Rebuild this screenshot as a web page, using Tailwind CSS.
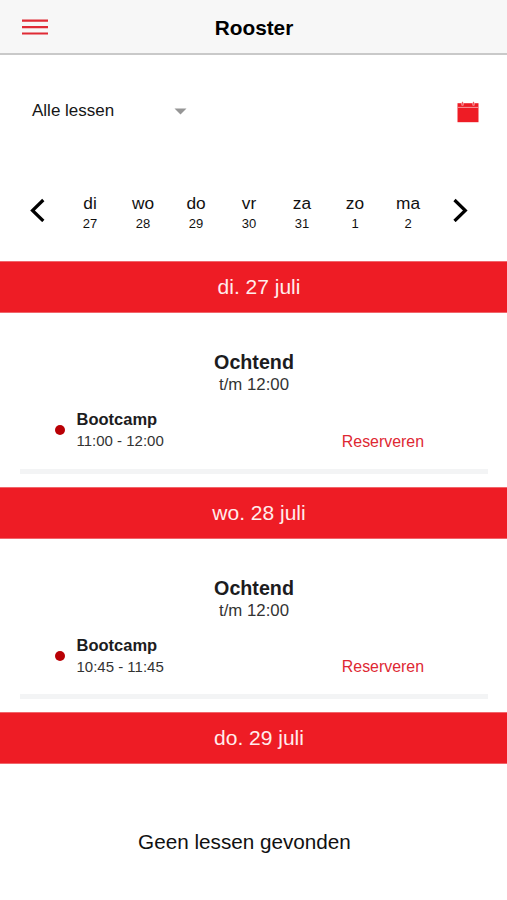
<!DOCTYPE html>
<html lang="nl">
<head>
<meta charset="utf-8">
<title>Rooster</title>
<script src="https://cdn.jsdelivr.net/npm/@tailwindcss/browser@4"></script>
</head>
<body class="w-[507px] h-[900px] overflow-hidden bg-white text-black font-['Liberation_Sans',Arial,sans-serif]">
<header class="h-[55px] bg-[#f7f7f7] border-b-2 border-[#c9c9c9] grid grid-cols-[1fr_auto_1fr] items-center pl-[22px] pr-[21px]">
  <button aria-label="Menu" class="w-[26px]"><svg class="block" width="26" height="18" viewBox="0 0 26 18" stroke="#e02b35" stroke-width="2.2"><path d="M0 2.7h26M0 9.2h26M0 15.5h26"/></svg></button>
  <h1 class="font-bold text-[20.8px] leading-6 pt-[3px]">Rooster</h1>
</header>
<div class="h-[110px] flex items-center justify-between pl-8 pr-7">
  <button class="flex items-center text-[17px] leading-6 text-[#151515]"><span class="w-[142px] text-left pt-[2px]">Alle lessen</span><svg class="mt-[3px]" width="13" height="7" viewBox="0 0 13 7"><path d="M.5.5h12l-6 6z" fill="#969696"/></svg></button>
  <button aria-label="Kalender"><svg class="mt-[3px]" width="22" height="22" viewBox="0 0 22 22"><path d="M.5 2.2h21v19H.5z" fill="#ee1c25"/><path d="M.5 6.4h21" stroke="#f79a9e"/><path d="M5.5 1v3.5M16.5 1v3.5" stroke="#fbc6c8" stroke-width="2"/><path d="M5.5 .8v3M16.5 .8v3" stroke="#ee5a60"/></svg></button>
</div>
<nav class="h-24 flex items-start pt-[26px] text-center">
  <button aria-label="Vorige" class="w-[63.5px] pl-[29px] pr-[16.5px] pt-[7px]"><svg width="18" height="24" viewBox="0 0 18 24" fill="none" stroke="#000" stroke-width="3.2"><path d="M14.3 2 3.5 12.5 14.3 23"/></svg></button>
  <div class="w-[371px] grid grid-cols-7 text-[17.3px] leading-6 text-[#111]">
    <div>di<p class="text-[13px] leading-[18px]">27</p></div>
    <div>wo<p class="text-[13px] leading-[18px]">28</p></div>
    <div>do<p class="text-[13px] leading-[18px]">29</p></div>
    <div>vr<p class="text-[13px] leading-[18px]">30</p></div>
    <div>za<p class="text-[13px] leading-[18px]">31</p></div>
    <div>zo<p class="text-[13px] leading-[18px]">1</p></div>
    <div>ma<p class="text-[13px] leading-[18px]">2</p></div>
  </div>
  <button aria-label="Volgende" class="pl-[16.5px] pt-[7px]"><svg width="18" height="24" viewBox="0 0 18 24" fill="none" stroke="#000" stroke-width="3.2"><path d="M3.5 2 14.3 12.5 3.5 23"/></svg></button>
</nav>
<section class="h-[226px]">
  <h2 class="h-[52px] bg-[#ee1c25] border-y border-[#f0666b] text-center text-[21px] leading-[49px] text-[#ffecec] pl-[11px]">di. 27 juli</h2>
  <div class="pt-[37px] text-center text-[#1c1c1e]">
    <h3 class="font-bold text-[19.7px] leading-6 pl-px">Ochtend</h3>
    <p class="text-[16.8px] leading-[22px] text-[#333] pl-px">t/m 12:00</p>
  </div>
  <div class="ml-5 mr-[19px] mt-[12px] h-[66px] flex items-start border-b-5 border-[#f3f4f5] pl-[34.5px] pr-[64px]">
    <span class="size-[10px] rounded-full bg-[#b90005] mt-[17px] mr-[12px]"></span>
    <div><h4 class="font-bold text-[16.5px] leading-[22px] text-[#1c1c1e] pb-px">Bootcamp</h4><p class="text-[15px] leading-5 text-[#333]">11:00 - 12:00</p></div>
    <button class="ml-auto mt-[23px] text-[15.9px] leading-[22px] text-[#de2833]">Reserveren</button>
  </div>
</section>
<section class="h-[225px]">
  <h2 class="h-[52px] bg-[#ee1c25] border-y border-[#f0666b] text-center text-[21px] leading-[49px] text-[#ffecec] pl-[11px]">wo. 28 juli</h2>
  <div class="pt-[37px] text-center text-[#1c1c1e]">
    <h3 class="font-bold text-[19.7px] leading-6 pl-px">Ochtend</h3>
    <p class="text-[16.8px] leading-[22px] text-[#333] pl-px">t/m 12:00</p>
  </div>
  <div class="ml-5 mr-[19px] mt-[12px] h-[65px] flex items-start border-b-5 border-[#f3f4f5] pl-[34.5px] pr-[64px]">
    <span class="size-[10px] rounded-full bg-[#b90005] mt-[17px] mr-[12px]"></span>
    <div><h4 class="font-bold text-[16.5px] leading-[22px] text-[#1c1c1e] pb-px">Bootcamp</h4><p class="text-[15px] leading-5 text-[#333]">10:45 - 11:45</p></div>
    <button class="ml-auto mt-[22px] text-[15.9px] leading-[22px] text-[#de2833]">Reserveren</button>
  </div>
</section>
<section>
  <h2 class="h-[52px] bg-[#ee1c25] border-y border-[#f0666b] text-center text-[21px] leading-[49px] text-[#ffecec] pl-[11px]">do. 29 juli</h2>
  <p class="pt-[66px] pr-[18px] text-center text-[20.7px] leading-6 text-[#111]">Geen lessen gevonden</p>
</section>
</body>
</html>
